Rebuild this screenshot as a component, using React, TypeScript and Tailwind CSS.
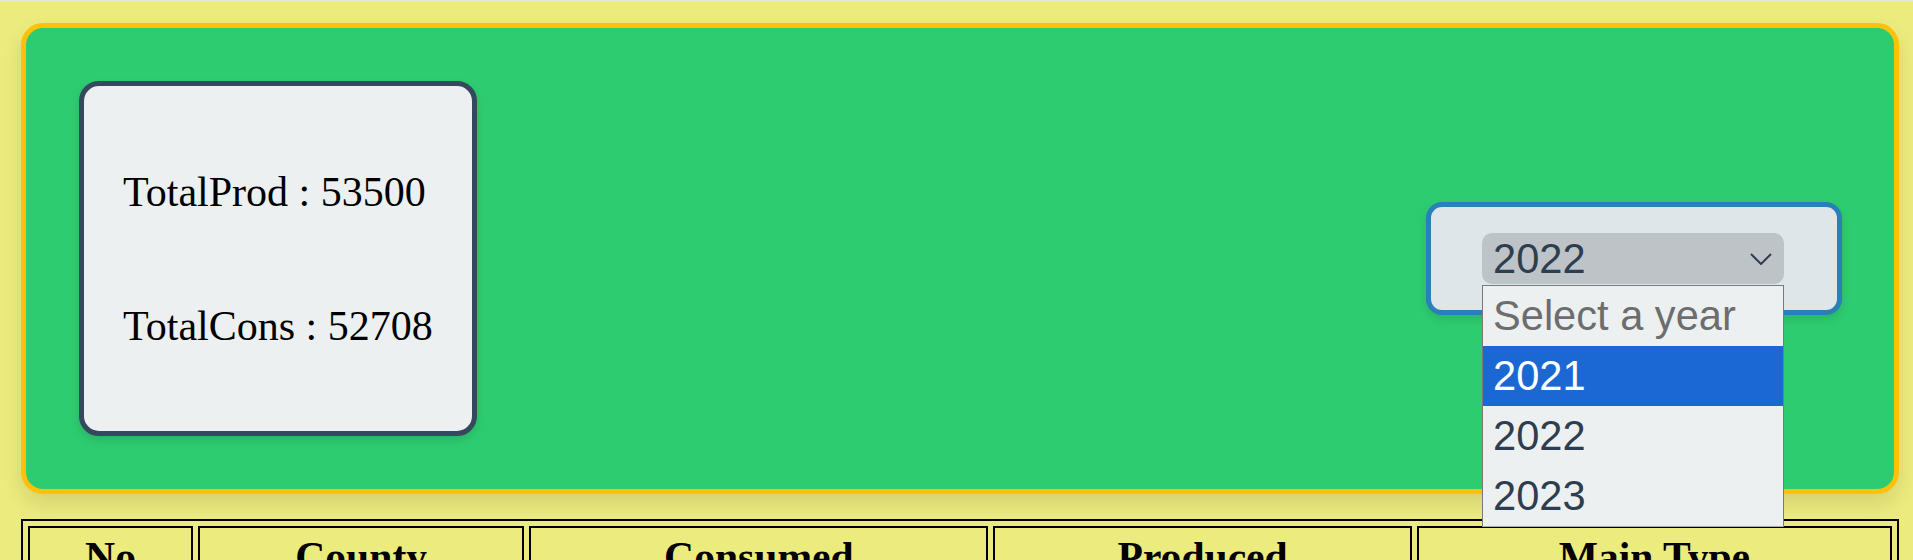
import { useState } from 'react';

const years = ['2021', '2022', '2023'];

const columns = [
  { label: 'No', width: 'w-[165px]' },
  { label: 'County', width: 'w-[326px]' },
  { label: 'Consumed', width: 'w-[459px]' },
  { label: 'Produced', width: 'w-[418px]' },
  { label: 'Main Type', width: 'w-[475px]' },
];

export default function App(): React.JSX.Element {
  const [year, setYear] = useState('2022');
  const [open, setOpen] = useState(true);
  const [hovered] = useState('2021');

  return (
    <div className="min-h-screen bg-[#eceb7e] font-['Liberation_Serif',serif]">
      <div className="h-[2px] bg-[#e3e3df]" />
      <div className="pl-[21px] pr-[14px]">
        {/* Summary panel */}
        <section className="mt-[21px] flex items-center justify-between rounded-[22px] border-[5px] border-[#ffc107] bg-[#2ecc71] py-[53px] pl-[53px] pr-[52px] shadow-[0_10px_20px_rgba(0,0,0,0.1)]">
          <div className="flex flex-col rounded-[20px] border-[5px] border-[#34495e] bg-[#ecf0f1] px-[39px] pt-[82px] pb-[81px] text-[42px] leading-[48px] text-black shadow-[0_4px_10px_rgba(0,0,0,0.12)]">
            <p>TotalProd : 53500</p>
            <p className="mt-[86px]">TotalCons : 52708</p>
          </div>

          <div className="rounded-[16px] border-[5px] border-[#2980b9] bg-[#dfe6e9] py-[26px] pl-[51px] pr-[53px] shadow-[0_4px_10px_rgba(0,0,0,0.12)]">
            <div className="relative w-[302px]">
              <button
                type="button"
                onClick={() => setOpen(!open)}
                className="flex h-[51px] w-full items-center justify-between rounded-[10px] bg-[#bdc3c7] pl-[11px] pr-[12px] font-['Liberation_Sans',Arial,sans-serif] text-[41.6px] leading-none text-[#2c3e50]"
              >
                <span>{year}</span>
                <svg width="22" height="12" viewBox="0 0 22 12" fill="none">
                  <polyline points="1,1 11,11 21,1" stroke="#2c3e50" strokeWidth="2" />
                </svg>
              </button>

              {open && (
                <ul className="absolute left-0 top-full z-50 mt-[1px] w-full border border-[#7a7a7a] border-b-[#a9a9a9] bg-[#ecf0f1] font-['Liberation_Sans',Arial,sans-serif] text-[41.6px] leading-none">
                  <li className="flex h-[60px] items-center pl-[10px] text-[#6d6d6d]">Select a year</li>
                  {years.map((y) => (
                    <li
                      key={y}
                      onClick={() => {
                        setYear(y);
                        setOpen(false);
                      }}
                      className={
                        y === hovered
                          ? 'flex h-[60px] items-center bg-[#1b68d4] pl-[10px] text-white'
                          : 'flex h-[60px] items-center pl-[10px] text-[#2c3e50]'
                      }
                    >
                      {y}
                    </li>
                  ))}
                </ul>
              )}
            </div>
          </div>
        </section>

        {/* Data table */}
        <table className="mt-[25px] w-full border-separate border-[2px] border-black [border-spacing:5px]">
          <thead>
            <tr>
              {columns.map((c) => (
                <th
                  key={c.label}
                  className={`${c.width} border-[2px] border-black py-[5px] text-center text-[41.6px] font-bold leading-[48px] text-black`}
                >
                  {c.label}
                </th>
              ))}
            </tr>
          </thead>
          <tbody>
            <tr>
              <td className="border-[2px] border-black text-center text-[32px]">1</td>
              <td className="border-[2px] border-black text-center text-[32px]">&nbsp;</td>
              <td className="border-[2px] border-black text-center text-[32px]">&nbsp;</td>
              <td className="border-[2px] border-black text-center text-[32px]">&nbsp;</td>
              <td className="border-[2px] border-black text-center text-[32px]">&nbsp;</td>
            </tr>
          </tbody>
        </table>
      </div>
    </div>
  );
}
